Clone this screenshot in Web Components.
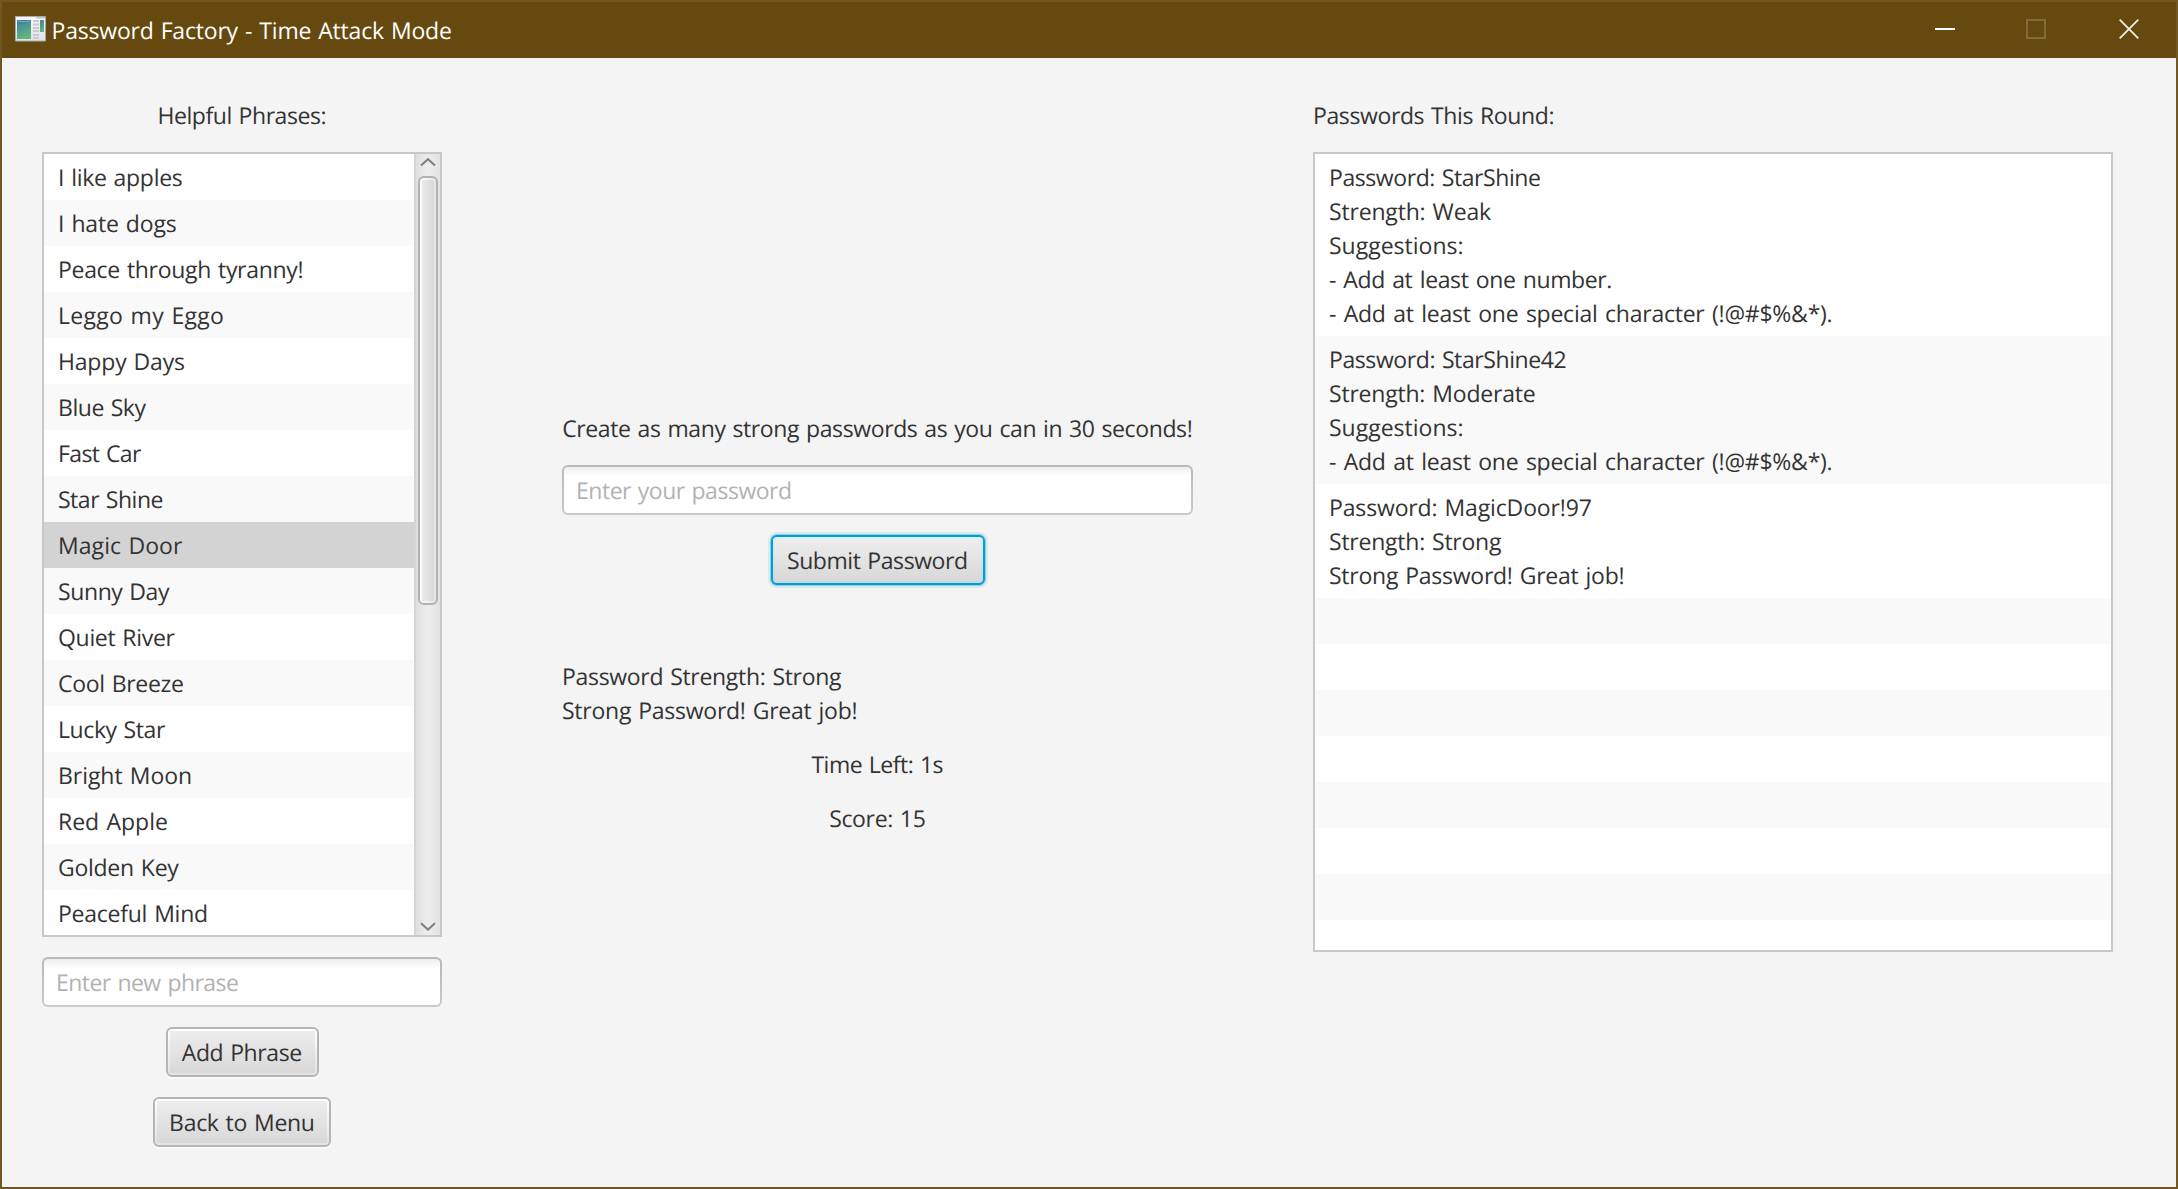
<!DOCTYPE html>
<html lang="en">
<head>
<meta charset="utf-8">
<title>Password Factory - Time Attack Mode</title>
<style>
html, body { margin: 0; height: 100%; }
body { font: 23px/34px "Open Sans", "Noto Sans", sans-serif; color: #333; overflow: hidden; }
</style>
</head>
<body>
<app-window></app-window>
<script>
const measurer = document.createElement('canvas').getContext('2d');
const WORD_GAP = 1.3;
const define = (name, html, setup) => {
  const template = document.createElement('template');
  template.innerHTML = html;
  customElements.define(name, class extends HTMLElement {
    constructor() {
      super();
      this.attachShadow({ mode: 'open' }).append(template.content.cloneNode(true));
    }
    connectedCallback() { if (setup) setup(this, this.shadowRoot); }
  });
};

// One line of text, tracked so that its glyphs span `ink` pixels.
define('fx-text', `<style>
:host { display: block; white-space: pre; text-rendering: geometricPrecision; width: max-content; }
span { display: block; }
</style><span></span>`, (host, root) => {
  const text = host.getAttribute('text');
  const span = root.querySelector('span');
  span.textContent = text;
  const ink = parseFloat(host.getAttribute('ink'));
  if (!ink) return;
  const gap = text.startsWith('-') ? 1.8 : WORD_GAP;
  measurer.font = '23px "Open Sans"';
  measurer.textRendering = 'geometricPrecision';
  const m = measurer.measureText(text);
  const natural = m.actualBoundingBoxRight + m.actualBoundingBoxLeft + (text.split(' ').length - 1) * gap;
  const track = (ink - natural) / (text.length - 1);
  span.style.wordSpacing = gap + 'px';
  span.style.letterSpacing = track.toFixed(3) + 'px';
  span.style.marginRight = (-track).toFixed(3) + 'px';
});

define('fx-cell', `<style>
:host { display: block; box-sizing: border-box; min-height: 46px; flex: none; padding: 6px 14px; background: #fff; }
:host(:nth-of-type(even)) { background: #f9f9f9; }
:host([selected]) { background: #d3d3d3; }
</style><slot></slot>`);

define('fx-scrollbar', `<style>
:host { display: flex; flex-direction: column; align-items: center; box-sizing: border-box; width: 26px; flex: none;
  border-left: 2px solid #d5d5d5; background: linear-gradient(90deg, #dfdfdf, #ededed 50%, #e2e2e2); }
svg { display: block; flex: none; width: 24px; height: 22px; }
.thumb { box-sizing: border-box; width: 20px; height: 429px; border: 2px solid #b2b2b2; border-radius: 6px;
  background: linear-gradient(90deg, #ebebeb, #d9d9d9) 2px 2px / 12px 421px no-repeat, linear-gradient(90deg, #fff, #e4e4e4); }
.space { flex: 1; }
</style>
<svg viewBox="0 0 24 22"><path d="M5 11.6 12 5.2 19 11.6" fill="none" stroke="#7f7f7f" stroke-width="2"/></svg>
<div class="thumb"></div><div class="space"></div>
<svg viewBox="0 0 24 22"><path d="M5 10.2 12 16.6 19 10.2" fill="none" stroke="#7f7f7f" stroke-width="2"/></svg>`);

define('fx-list', `<style>
:host { display: flex; box-sizing: border-box; border: 2px solid #c8c8c8; background: #fff; overflow: hidden; }
.cells { display: flex; flex-direction: column; flex: 1; min-width: 0; overflow: hidden; }
</style><div class="cells"><slot></slot></div><slot name="bar"></slot>`);

define('fx-field', `<style>
:host { display: block; box-sizing: border-box; height: 50px; padding: 2px; border-radius: 6px; color: #b2b2b2;
  background: linear-gradient(#b9b9b9, #cacaca); }
div { box-sizing: border-box; height: 46px; padding: 6px 12px; border-radius: 4px;
  background: linear-gradient(#ededed, #fff 9px); }
</style><div><slot></slot></div>`);

define('fx-button', `<style>
:host { display: block; box-sizing: border-box; height: 50px; border: 2px solid #b5b5b5; border-radius: 6px; padding: 6px 14px;
  box-shadow: 0 2px 0 #fafafa; background-color: #e4e4e4;
  background-image: linear-gradient(#ededed, #d8d8d8), linear-gradient(#fff, #e3e3e3);
  background-size: calc(100% - 4px) calc(100% - 4px), 100% 100%; background-position: center; background-repeat: no-repeat; }
:host([focused]) { border-color: #039ed3; box-shadow: 0 0 0 1px rgba(3,158,211,.35), 0 0 0 3px rgba(3,158,211,.11), inset 0 0 0 2px rgba(3,158,211,.13); }
slot { display: flex; justify-content: center; }
</style><slot></slot>`);

define('title-bar', `<style>
:host { display: flex; align-items: center; height: 56px; background: #66490f; color: #fff; padding: 0 37px 0 13px; }
svg { display: block; flex: none; }
.logo { margin: -2px 5.5px 0 0; }
.controls { display: flex; gap: 71px; margin: -2px 0 0 auto; }
.controls svg { width: 20px; height: 20px; }
.controls svg:last-child { margin-left: 2px; }
</style>
<svg class="logo" width="31" height="26" viewBox="0 0 31 26">
  <defs>
    <linearGradient id="g" x1="0" y1="0" x2=".3" y2="1"><stop offset="0" stop-color="#4583a4"/><stop offset=".5" stop-color="#4f9a91"/><stop offset="1" stop-color="#64b57b"/></linearGradient>
    <linearGradient id="f" x1="0" y1="0" x2="0" y2="1"><stop offset="0" stop-color="#f7f7f8"/><stop offset="1" stop-color="#dfe2e7"/></linearGradient>
  </defs>
  <path d="M.5.5h30v24.5H.5z" fill="url(#f)" stroke="#a7abb4"/>
  <path d="M21 1h9v1.5h-9z" fill="#c4c6ca"/>
  <path d="M1 3h29v1H1z" fill="#fff"/>
  <path d="M2 4h14v19H2z" fill="url(#g)"/>
  <path d="M2 11C6 7 11 6.5 16 6V4H2z" fill="#3c77a3" opacity=".45"/>
  <path d="M3 5.5h12" stroke="#77aab9"/>
  <path d="M18 5h6M18 8.5h6M18 12h6M18 15h6M18 19h6M18 22h6" stroke="#c9cbcf" stroke-width="1.8"/>
  <path d="M25 4h4v12h-4z" fill="url(#g)"/>
</svg>
<fx-text text="Password Factory - Time Attack Mode" ink="397.5"></fx-text>
<div class="controls">
  <svg viewBox="0 0 20 20"><path d="M0 10h20" stroke="#fff" stroke-width="2"/></svg>
  <svg viewBox="0 0 20 20"><path d="M1 1h18v18H1z" fill="none" stroke="#846b3b" stroke-width="2"/></svg>
  <svg viewBox="0 0 20 20"><path d="M.7.7 19.3 19.3M19.3.7.7 19.3" stroke="#f4f0ea" stroke-width="1.7"/></svg>
</div>`);

define('phrase-panel', `<style>
:host { display: flex; flex-direction: column; align-items: center; gap: 20px; width: 400px; flex: none; }
fx-list { align-self: stretch; flex: 1; min-height: 0; }
fx-field { align-self: stretch; }
</style>
<fx-text text="Helpful Phrases:" ink="166"></fx-text>
<fx-list><fx-scrollbar slot="bar"></fx-scrollbar></fx-list>
<fx-field><fx-text text="Enter new phrase" ink="180"></fx-text></fx-field>
<fx-button style="width:153px"><fx-text text="Add Phrase" ink="119.5"></fx-text></fx-button>
<fx-button style="width:178px"><fx-text text="Back to Menu" ink="142.7"></fx-text></fx-button>`, (host, root) => {
  const phrases = [['I like apples', 121.8], ['I hate dogs', 115.8], ['Peace through tyranny!', 242.5], ['Leggo my Eggo', 163],
    ['Happy Days', 124], ['Blue Sky', 86.5], ['Fast Car', 82], ['Star Shine', 103.5], ['Magic Door', 123], ['Sunny Day', 111],
    ['Quiet River', 116.5], ['Cool Breeze', 124], ['Lucky Star', 106], ['Bright Moon', 131], ['Red Apple', 107],
    ['Golden Key', 120.3], ['Peaceful Mind', 147]];
  const list = root.querySelector('fx-list');
  for (const [text, ink] of phrases) {
    const cell = document.createElement('fx-cell');
    if (text === 'Magic Door') cell.setAttribute('selected', '');
    const line = document.createElement('fx-text');
    line.setAttribute('text', text);
    line.setAttribute('ink', ink);
    cell.append(line);
    list.append(cell);
  }
});

define('game-panel', `<style>
:host { display: flex; flex-direction: column; justify-content: center; align-items: center; gap: 20px; width: 631px; flex: none; }
fx-field, .result { align-self: stretch; }
.blank { height: 34px; }
</style>
<fx-text text="Create as many strong passwords as you can in 30 seconds!" ink="628.5"></fx-text>
<fx-field><fx-text text="Enter your password" ink="213"></fx-text></fx-field>
<fx-button focused style="width:214px"><fx-text text="Submit Password" ink="179"></fx-text></fx-button>
<div class="blank"></div>
<div class="result">
  <fx-text text="Password Strength: Strong" ink="278"></fx-text>
  <fx-text text="Strong Password! Great job!" ink="293.5"></fx-text>
</div>
<fx-text text="Time Left: 1s" ink="131.2"></fx-text>
<fx-text text="Score: 15" ink="94.5"></fx-text>`);

define('round-panel', `<style>
:host { display: flex; flex-direction: column; gap: 20px; width: 800px; flex: none; }
fx-list { height: 800px; }
</style>
<fx-text text="Passwords This Round:" ink="238.4"></fx-text>
<fx-list>
  <fx-cell>
    <fx-text text="Password: StarShine" ink="209"></fx-text>
    <fx-text text="Strength: Weak" ink="161"></fx-text>
    <fx-text text="Suggestions:" ink="132.5"></fx-text>
    <fx-text text="- Add at least one number." ink="282.3"></fx-text>
    <fx-text text="- Add at least one special character (!@#$%&amp;*)." ink="502.6"></fx-text>
  </fx-cell>
  <fx-cell>
    <fx-text text="Password: StarShine42" ink="234.5"></fx-text>
    <fx-text text="Strength: Moderate" ink="204.7"></fx-text>
    <fx-text text="Suggestions:" ink="132.5"></fx-text>
    <fx-text text="- Add at least one special character (!@#$%&amp;*)." ink="502.6"></fx-text>
  </fx-cell>
  <fx-cell>
    <fx-text text="Password: MagicDoor!97" ink="259.7"></fx-text>
    <fx-text text="Strength: Strong" ink="172"></fx-text>
    <fx-text text="Strong Password! Great job!" ink="293.5"></fx-text>
  </fx-cell>
  <fx-cell></fx-cell><fx-cell></fx-cell><fx-cell></fx-cell><fx-cell></fx-cell>
  <fx-cell></fx-cell><fx-cell></fx-cell><fx-cell></fx-cell><fx-cell></fx-cell>
</fx-list>`);

define('app-window', `<style>
:host { display: flex; flex-direction: column; box-sizing: border-box; height: 1189px; border: 2px solid #735721; background: #f4f4f4; }
main { display: flex; flex: 1; min-height: 0; gap: 120px; padding: 40px; }
</style>
<title-bar></title-bar>
<main><phrase-panel></phrase-panel><game-panel></game-panel><round-panel></round-panel></main>`);
</script>
</body>
</html>
